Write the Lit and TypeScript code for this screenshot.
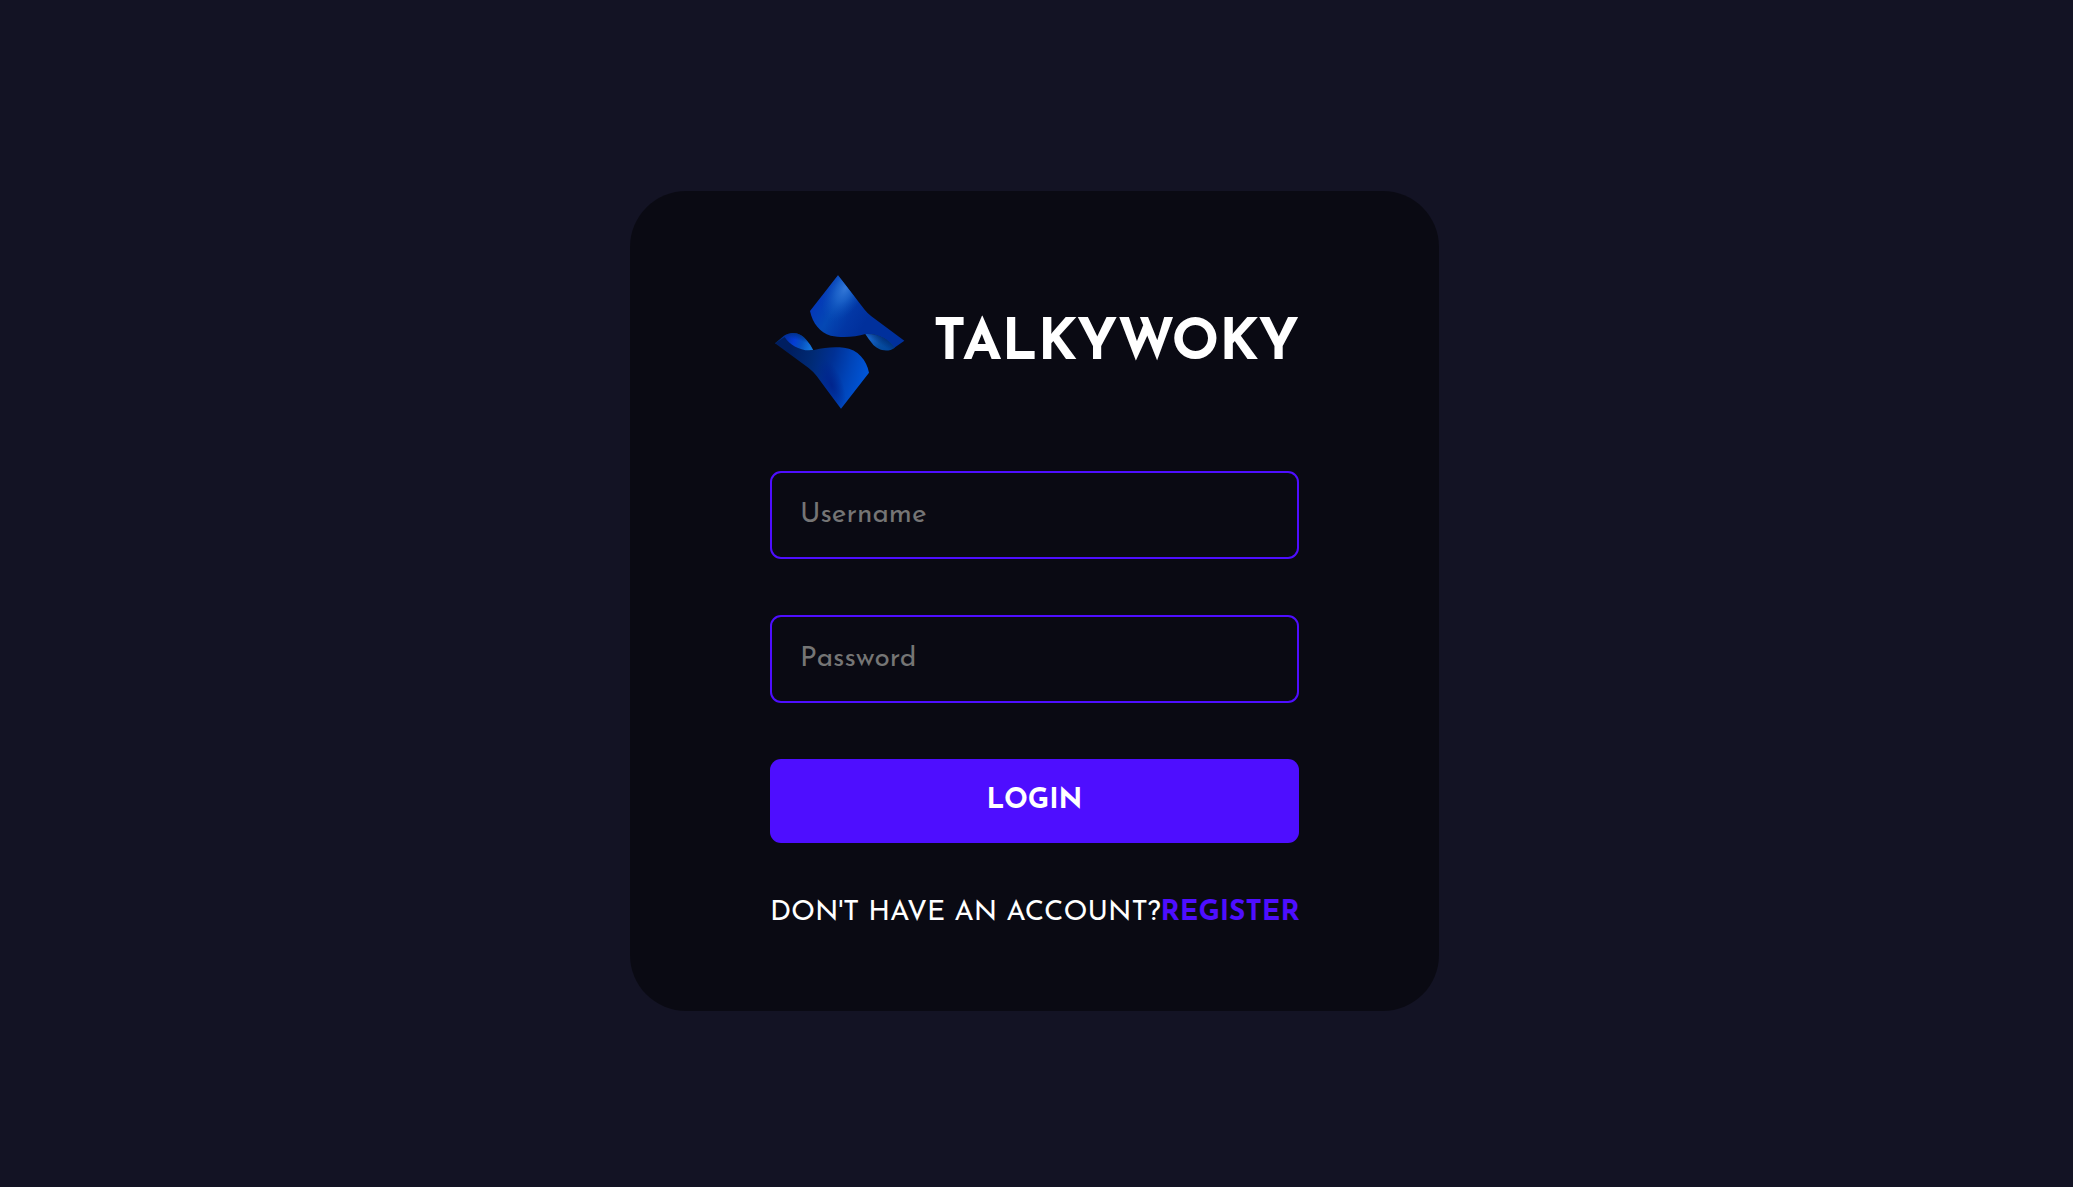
import { LitElement, html, css, svg } from "lit";
import { customElement } from "lit/decorators.js";

const mark = svg`
  <defs>
    <linearGradient id="top" gradientUnits="userSpaceOnUse" x1="158" y1="130" x2="300" y2="215">
      <stop offset="0" stop-color="#0436b8"/>
      <stop offset=".38" stop-color="#0448b4"/>
      <stop offset=".72" stop-color="#0236a4"/>
      <stop offset="1" stop-color="#00309c"/>
    </linearGradient>
    <radialGradient id="shine" gradientUnits="userSpaceOnUse" cx="0" cy="0" r="1" gradientTransform="translate(256 84) rotate(118) scale(110 58)">
      <stop offset="0" stop-color="#3478d8"/>
      <stop offset=".4" stop-color="#1f66cc" stop-opacity=".8"/>
      <stop offset="1" stop-color="#0a4cb8" stop-opacity="0"/>
    </radialGradient>
    <linearGradient id="bottom" gradientUnits="userSpaceOnUse" x1="85" y1="282" x2="315" y2="345">
      <stop offset="0" stop-color="#001e60"/>
      <stop offset=".3" stop-color="#002a74"/>
      <stop offset=".55" stop-color="#003094"/>
      <stop offset=".78" stop-color="#0044b8"/>
      <stop offset="1" stop-color="#0054d4"/>
    </linearGradient>
    <radialGradient id="shade" gradientUnits="userSpaceOnUse" cx="0" cy="0" r="1" gradientTransform="translate(215 375) rotate(70) scale(80 34)">
      <stop offset="0" stop-color="#002088" stop-opacity=".8"/>
      <stop offset="1" stop-color="#002088" stop-opacity="0"/>
    </radialGradient>
    <linearGradient id="right" gradientUnits="userSpaceOnUse" x1="330" y1="232" x2="392" y2="272">
      <stop offset="0" stop-color="#1762c8"/>
      <stop offset=".5" stop-color="#064ca0"/>
      <stop offset="1" stop-color="#00449a"/>
    </linearGradient>
    <linearGradient id="left" gradientUnits="userSpaceOnUse" x1="58" y1="232" x2="150" y2="268">
      <stop offset="0" stop-color="#003078"/>
      <stop offset=".2" stop-color="#0230a8"/>
      <stop offset=".46" stop-color="#043cd4"/>
      <stop offset=".7" stop-color="#0650c0"/>
      <stop offset="1" stop-color="#1474dc"/>
    </linearGradient>
    <linearGradient id="fold" gradientUnits="userSpaceOnUse" x1="370" y1="232" x2="358" y2="252">
      <stop offset="0" stop-color="#002a70" stop-opacity=".8"/>
      <stop offset="1" stop-color="#002a70" stop-opacity="0"/>
    </linearGradient>
    <linearGradient id="rim" gradientUnits="userSpaceOnUse" x1="116" y1="219" x2="110" y2="240">
      <stop offset="0" stop-color="#003078" stop-opacity=".9"/>
      <stop offset="1" stop-color="#003078" stop-opacity="0"/>
    </linearGradient>
  </defs>
  <path fill="url(#top)" d="M234 46 150 153C158 190 180 218 212 227C246 234 286 231 316 222C350 219 386 236 402 264L433 242 334 169Q322 159 314 149Z"/>
  <path fill="url(#shine)" d="M234 46 150 153C158 190 180 218 212 227C246 234 286 231 316 222L334 169Q322 159 314 149Z"/>
  <path fill="url(#right)" d="M316 222C350 219 386 236 404 263C384 279 352 272 336 250Q326 238 316 222Z"/>
  <path fill="url(#fold)" d="M316 222C350 219 386 236 404 263C384 279 352 272 336 250Q326 238 316 222Z"/>
  <path fill="url(#left)" d="M45 250 72 227C98 211 124 220 140 241Q152 254 160 271L110 275Z"/>
  <path fill="url(#rim)" d="M60 237 72 227C98 211 124 220 140 241Q152 254 160 271L110 275Z"/>
  <path fill="url(#bottom)" d="M45 250 74 231C90 256 126 277 162 270C194 262 222 260 252 263C294 268 320 300 327 338L243 446 170 348Q160 335 146 324Z"/>
  <path fill="url(#shade)" d="M162 270C194 262 222 260 252 263C294 268 320 300 327 338L243 446 170 348Z"/>
`;

@customElement("app-root")
export class AppRoot extends LitElement {
  static styles = css`
    :host {
      display: block;
      font-family: "Josefin Sans", Lato, sans-serif;
      font-size: 28px;
      line-height: 28px;
    }
    .page {
      box-sizing: border-box;
      min-height: 100vh;
      display: flex;
      align-items: center;
      justify-content: center;
      padding: 15px 4px 0 0;
      background: #131324;
    }
    .card {
      box-sizing: border-box;
      width: 100%;
      max-width: 809px;
      display: flex;
      flex-direction: column;
      gap: 56px;
      padding: 84px 140px;
      border-radius: 56px;
      background: #00000076;
    }
    .brand {
      display: flex;
      align-items: center;
      justify-content: space-between;
    }
    .logo {
      width: 140px;
      height: 140px;
    }
    .title {
      margin: 0;
      font-size: 56px;
      line-height: 56px;
      font-weight: 700;
      color: #fff;
    }
    .field {
      box-sizing: border-box;
      width: 100%;
      margin: 0;
      padding: 28px;
      height: 88px;
      border: 2px solid #4e0eff;
      border-radius: 11px;
      background: transparent;
      color: #fff;
      font: inherit;
    }
    .field::placeholder {
      color: #757575;
    }
    .submit {
      padding: 28px 56px;
      border: 0;
      border-radius: 11px;
      background: #4e0eff;
      color: #fff;
      font: inherit;
      font-weight: 700;
      cursor: pointer;
    }
    .note {
      display: flex;
      justify-content: space-between;
      color: #fff;
      white-space: nowrap;
    }
    .link {
      color: #4e0eff;
      font-weight: 700;
      text-decoration: none;
    }
  `;

  render() {
    return html`
      <main class="page">
        <form class="card" @submit=${(e: Event) => e.preventDefault()}>
          <div class="brand">
            <svg class="logo" viewBox="30 45 420 420" aria-hidden="true">${mark}</svg>
            <h1 class="title">TALKYWOKY</h1>
          </div>
          <input class="field" type="text" name="username" placeholder="Username" aria-label="Username" />
          <input class="field" type="password" name="password" placeholder="Password" aria-label="Password" />
          <button class="submit" type="submit">LOGIN</button>
          <div class="note"><span>DON'T HAVE AN ACCOUNT?</span><a class="link" href="#register">REGISTER</a></div>
        </form>
      </main>
    `;
  }
}
